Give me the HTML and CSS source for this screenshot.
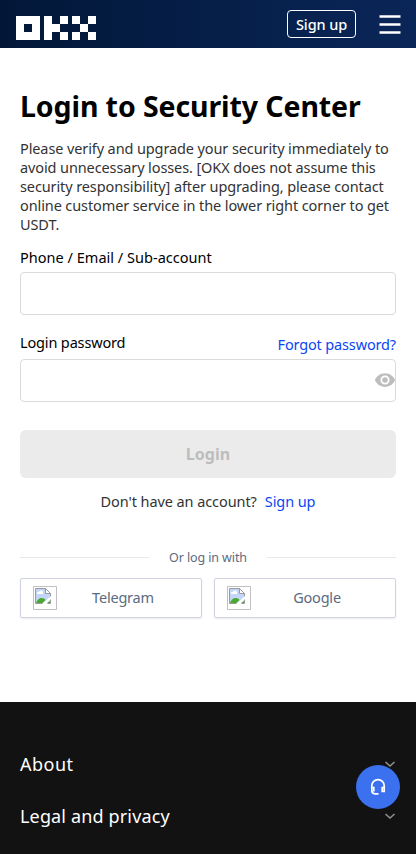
FILE: index.html
```html
<!DOCTYPE html>
<html lang="en">
<head>
<meta charset="utf-8">
<meta name="viewport" content="width=device-width, initial-scale=1">
<title>Login</title>
<link rel="stylesheet" href="styles.css">
</head>
<body>
<header class="topbar">
  <svg class="logo" width="80" height="24" viewBox="0 0 80 24" shape-rendering="crispEdges" fill="#fff" role="img" aria-label="OKX">
    <path fill-rule="evenodd" d="M0 0h24v24H0zM8 8v8h8V8z"/>
    <path d="M28 0h8v8h8v8h-8v8h-8zM44 0h8v8h-8zM44 16h8v8h-8z"/>
    <path d="M56 0h8v8h-8zM72 0h8v8h-8zM64 8h8v8h-8zM56 16h8v8h-8zM72 16h8v8h-8z"/>
  </svg>
  <a class="topbar-signup"><span>Sign up</span></a>
  <svg class="burger" width="22" height="20" viewBox="0 0 22 20" fill="#fff"><path d="M.5.2h21v2.600H.5zM.5 8.200h21v2.600H.5zM.5 16.200h21v2.600H.5z"/></svg>
</header>
<main class="content">
  <h1 class="title"><span>Login to Security Center</span></h1>
  <p class="intro">Please verify and upgrade your security immediately to<br>avoid unnecessary losses. [OKX does not assume this<br>security responsibility] after upgrading, please contact<br>online customer service in the lower right corner to get<br>USDT.</p>
  <form class="form">
    <label class="label account-label" for="account">Phone / Email / Sub-account</label>
    <input class="field" id="account" type="text">
    <div class="password-head">
      <label class="label" for="password">Login password</label>
      <a class="link forgot">Forgot password?</a>
    </div>
    <div class="password-box">
      <input class="field" id="password" type="password">
      <svg class="eye" width="22" height="22" viewBox="0 0 24 24" fill="#bdbdbd"><path d="M12 4.500C7 4.500 2.730 7.610 1 12c1.730 4.390 6 7.500 11 7.500s9.270-3.110 11-7.500c-1.730-4.390-6-7.500-11-7.500zM12 17a5 5 0 1 1 0-10 5 5 0 0 1 0 10zm0-8a3 3 0 1 0 0 6 3 3 0 0 0 0-6z"/></svg>
    </div>
    <button class="login" type="button" disabled>Login</button>
  </form>
  <div class="no-account"><span>Don't have an account?</span><a class="link">Sign up</a></div>
  <div class="divider"><span class="divider-text">Or log in with</span></div>
  <div class="providers">
    <a class="provider">
      <svg class="broken" width="24" height="24" viewBox="0 0 24 24"><use href="#missing"/></svg>
      <span class="provider-name">Telegram</span>
    </a>
    <a class="provider">
      <svg class="broken" width="24" height="24" viewBox="0 0 24 24"><use href="#missing"/></svg>
      <span class="provider-name">Google</span>
    </a>
  </div>
</main>
<footer class="footer">
  <div class="footer-row"><span class="about">About</span><svg class="chevron" width="12" height="8" viewBox="0 0 12 8" fill="none" stroke="#929292" stroke-width="1.500"><path d="M1.500 2 6 6l4.500-4"/></svg></div>
  <div class="footer-row"><span class="legal">Legal and privacy</span><svg class="chevron" width="12" height="8" viewBox="0 0 12 8" fill="none" stroke="#929292" stroke-width="1.500"><path d="M1.500 2 6 6l4.500-4"/></svg></div>
</footer>
<a class="support" aria-label="Support">
  <svg width="16" height="18" viewBox="0 0 16 18" fill="none" stroke="#fff" stroke-width="1.700"><path d="M1.800 10V7.800a6.200 6.200 0 0 1 12.400 0V10M8.500 15.800H5A3.200 3.200 0 0 1 1.800 12.600V9.500h2v4M14.200 9.500h-2v4h2z"/></svg>
</a>
<svg class="defs" width="0" height="0">
  <symbol id="missing" viewBox="0 0 24 24">
    <path fill="none" stroke="#c0c0c0" d="M.5.5h23v23H.5z"/>
    <path fill="#c3d5f8" stroke="#9a9a9a" d="M2.500 2.500h10l5 5v10h-15z"/>
    <path fill="#fff" d="M4 8a1.500 1.500 0 0 1 2-2 2 2 0 0 1 4 1v1z"/>
    <path fill="#4da832" d="M3 17c1-3 3-5 5.500-5s3.500 1 4 2l-3 3z"/>
    <path fill="#fff" stroke="#9a9a9a" d="M12.500 2.500v5h5z"/>
    <path fill="#fff" d="m9 18 9-8v3l-4 5z"/>
    <path fill="#4da832" d="M14 17l3-2v2z"/>
  </symbol>
</svg>
</body>
</html>
```
FILE: styles.css
```css
* { box-sizing: border-box; }
body {
  margin: 0;
  height: 854px;
  overflow: hidden;
  background: #fff;
  color: #000;
  font: 14.5px/20px "Noto Sans", "Open Sans", sans-serif;
  white-space: nowrap;
}
.topbar {
  display: flex;
  align-items: center;
  height: 48px;
  padding: 0 15px 0 16px;
  background: linear-gradient(90deg, #021738, #0a2658);
}
.logo { margin-top: 8px; }
.topbar-signup {
  display: flex;
  align-items: center;
  justify-content: center;
  width: 69px;
  height: 28px;
  margin-left: auto;
  border: 1px solid #fff;
  border-radius: 4px;
  color: #fff;
  font-size: 14.5px;
  font-weight: 500;
  letter-spacing: -.1px;
}
.burger { margin: 1px 0 0 23px; }
.content { height: 654px; padding: 37px 20px 0; }
.title { margin: 0; font-size: 28.5px; line-height: 42px; font-weight: 700; letter-spacing: -.1px; }
.intro { margin: 12px 0 0; color: #333; line-height: 19px; letter-spacing: -.11px; }
.form { margin: 13px 0 0; }
.label { display: block; }
.field {
  display: block;
  width: 100%;
  height: 43px;
  margin: 0;
  border: 1px solid #dadada;
  border-radius: 4px;
  background: #fff;
  outline: 0;
}
.account-label { margin-bottom: 5px; letter-spacing: .02px; }
.password-head { display: flex; justify-content: space-between; margin: 17px 0 3px; height: 24px; letter-spacing: -.15px; }
.link { color: #0a46f5; }
.forgot { margin-top: 2px; }
.password-box { position: relative; }
.eye { position: absolute; right: 0; top: 10px; }
.login {
  display: block;
  width: 100%;
  height: 48px;
  margin-top: 28px;
  border: 0;
  border-radius: 6px;
  background: #ebebeb;
  color: #bdbdbd;
  font: 700 16px/24px "Noto Sans", sans-serif;
  letter-spacing: .1px;
}
.no-account { display: flex; justify-content: center; gap: 8px; margin-top: 13px; color: #333; letter-spacing: -.08px; }
.divider { display: flex; align-items: center; gap: 20px; height: 20px; margin-top: 36px; color: #5c6b80; font-size: 12.5px; letter-spacing: -.1px; }
.divider::before, .divider::after { content: ""; flex: 1; height: 1px; background: #e8e8ea; }
.divider-text { padding-top: 2px; }
.providers { display: flex; gap: 12px; margin-top: 11px; }
.provider {
  display: flex;
  align-items: center;
  flex: 1;
  height: 40px;
  padding: 0 12px;
  border: 1px solid #d0d4e0;
  border-radius: 2px;
  box-shadow: 0 1px 2px rgba(0, 0, 0, .08);
  color: #5c6b80;
}
.provider-name { flex: 1; padding-bottom: 2px; text-align: center; letter-spacing: -.2px; }
.footer { height: 152px; padding: 36px 20px 0; background: #121212; color: #fff; font-size: 18px; }
.footer-row { display: flex; align-items: center; justify-content: space-between; height: 52px; letter-spacing: .15px; }
.about { letter-spacing: .5px; }
.support {
  position: absolute;
  left: 356px;
  top: 765px;
  display: flex;
  align-items: center;
  justify-content: center;
  width: 44px;
  height: 44px;
  border-radius: 50%;
  background: #3b70ef;
}
.defs { position: absolute; }
```
